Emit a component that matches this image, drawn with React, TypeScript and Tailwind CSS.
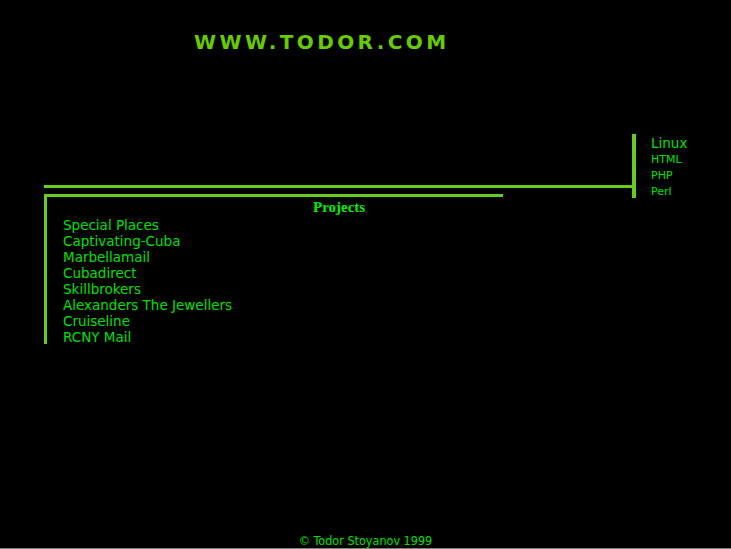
const projects = [
  "Special Places",
  "Captivating-Cuba",
  "Marbellamail",
  "Cubadirect",
  "Skillbrokers",
  "Alexanders The Jewellers",
  "Cruiseline",
  "RCNY Mail",
];

const skills = ["HTML", "PHP", "Perl"];

export default function App() {
  return (
    <div className="h-[549px] w-[731px] bg-black flex flex-col border-b border-[#808080] font-['DejaVu_Sans',sans-serif] text-[#00e000]">
      {/* Logo */}
      <div className="pt-[31px] pl-[194px] h-[134px]">
        <h1 className="text-[20px] leading-[22px] font-bold tracking-[3.4px] text-[#66cc00]">
          WWW.TODOR.COM
        </h1>
      </div>

      <div className="flex items-start pl-[44px]">
        {/* Left part */}
        <div className="w-[588px] flex flex-col">
          <div className="h-[51px]" />
          <div className="h-[3px] bg-[#66cc22]" />
          <div className="h-[6px]" />
          <div className="w-[459px] h-[150px] border-t-[3px] border-l-[3px] border-[#66cc22]">
            <h2 className="pl-[266px] pt-[1px] h-[19px] leading-[18px] text-[15px] font-bold font-['Liberation_Serif',serif] text-[#00ee00]">
              Projects
            </h2>
            <ul className="pl-[16px] pt-[1px]">
              {projects.map((p) => (
                <li key={p} className="h-[16px] leading-[16px] text-[13.5px]">
                  {p}
                </li>
              ))}
            </ul>
          </div>
        </div>

        {/* Right part */}
        <div className="w-[4px] h-[64px] bg-[#66cc22]" />
        <div className="pl-[15px] pt-[1px]">
          <div className="h-[16px] leading-[16px] text-[13.5px]">Linux</div>
          <div className="pt-[1px]">
            {skills.map((s) => (
              <div key={s} className="h-[16px] leading-[16px] text-[11px]">
                {s}
              </div>
            ))}
          </div>
        </div>
      </div>

      <div className="flex-1" />
      <footer className="text-center text-[12.5px] leading-[13px] pb-[1px] font-['DejaVu_Sans_Condensed',sans-serif]">
        © Todor Stoyanov 1999
      </footer>
    </div>
  );
}
